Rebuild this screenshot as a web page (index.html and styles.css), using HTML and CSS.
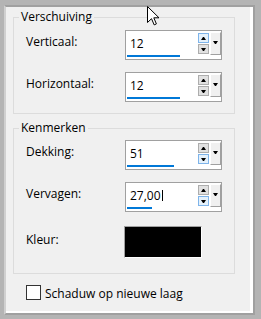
FILE: index.html
```html
<!DOCTYPE html>
<html lang="nl">
<head>
  <meta charset="UTF-8">
  <title>Slagschaduw</title>
  <link rel="stylesheet" href="styles.css">
</head>
<body>
  <div class="window">
    <div class="panel">

      <!-- Verschuiving -->
      <fieldset class="group group-shift">
        <legend>Verschuiving</legend>
        <div class="rows">
          <label class="lbl">Verticaal:</label>
          <div class="spin">
            <div class="field"><span class="val">12</span><span class="bar" style="width:53px"></span></div>
            <div class="arrows"><span class="btn hot"><i class="tri up"></i></span><span class="btn"><i class="tri down"></i></span></div>
            <span class="drop"><i class="tri down"></i></span>
          </div>

          <label class="lbl">Horizontaal:</label>
          <div class="spin">
            <div class="field"><span class="val">12</span><span class="bar" style="width:53px"></span></div>
            <div class="arrows"><span class="btn"><i class="tri up"></i></span><span class="btn"><i class="tri down"></i></span></div>
            <span class="drop"><i class="tri down"></i></span>
          </div>
        </div>
      </fieldset>

      <!-- Kenmerken -->
      <fieldset class="group group-props">
        <legend>Kenmerken</legend>
        <div class="rows">
          <label class="lbl">Dekking:</label>
          <div class="spin">
            <div class="field"><span class="val">51</span><span class="bar" style="width:47px"></span></div>
            <div class="arrows"><span class="btn"><i class="tri up"></i></span><span class="btn hot"><i class="tri down"></i></span></div>
            <span class="drop"><i class="tri down"></i></span>
          </div>

          <label class="lbl">Vervagen:</label>
          <div class="spin">
            <div class="field"><span class="val">27,00<span class="caret"></span></span><span class="bar" style="width:25px"></span></div>
            <div class="arrows"><span class="btn"><i class="tri up"></i></span><span class="btn hot"><i class="tri down"></i></span></div>
            <span class="drop"><i class="tri down"></i></span>
          </div>

          <label class="lbl lbl-color">Kleur:</label>
          <div class="swatch"></div>
        </div>
      </fieldset>

      <label class="check">
        <span class="box"></span>
        <span class="check-text">Schaduw op nieuwe laag</span>
      </label>

    </div>
  </div>

  <!-- muisaanwijzer -->
  <svg class="pointer" width="13" height="20" viewBox="0 0 13 20">
    <path d="M0.5 0.5 V16.5 L4.5 12.7 L7.2 18.9 L9.4 17.9 L6.8 11.8 H12 Z" fill="#fff" stroke="#000" stroke-width="1" stroke-linejoin="miter"/>
  </svg>
</body>
</html>
```

FILE: styles.css
```css
body { margin: 0; background: #b4b4b4; font-family: "Segoe UI", "Open Sans", sans-serif; font-size: 12px; color: #000; position: relative; width: 261px; height: 319px; overflow: hidden; }
.window { margin: 5px 6px 4px 4px; border: 2px solid #a0a0a0; border-left-color: #d0d0d0; }
.panel { background: #f0f0f0; border-right: 3px solid #fff; border-bottom: 2px solid #fff; height: 302px; padding-top: 2px; }

.group { margin: 0 15px 0 7px; padding: 0; border: 1px solid #dcdcdc; min-width: 0; }
.group legend { margin-left: 5px; padding: 0 2px; line-height: 16px; }
.group-shift { padding-top: 5px; padding-bottom: 11px; }
.group-props { margin-top: 6px; padding-top: 4px; padding-bottom: 15px; }

.rows { display: grid; grid-template-columns: 99px 97px; row-gap: 12px; padding-left: 12px; }
.group-props .rows .swatch { margin-top: 2px; }
.lbl { line-height: 16px; padding-top: 4px; }
.lbl-color { padding-top: 8px; }

.spin { display: flex; height: 30px; box-sizing: border-box; border: 1px solid #a0a0a0; background: #fff; }
.field { width: 72px; display: flex; flex-direction: column; padding: 5px 0 2px 0; box-sizing: border-box; }
.val { padding-left: 4px; line-height: 16px; }
.caret { display: inline-block; width: 1px; height: 11px; background: #000; vertical-align: -1px; margin-left: 1px; }
.bar { display: block; height: 2px; margin-top: auto; margin-left: 1px; background: #0078d7; }

.arrows { width: 11px; display: flex; flex-direction: column; gap: 1px; padding-top: 2px; }
.btn { height: 10px; box-sizing: border-box; border: 1px solid #adadad; background: #e1e1e1; display: flex; align-items: center; justify-content: center; }
.btn.hot { border-color: #7eb4ea; background: #e5f1fb; }
.drop { width: 11px; height: 23px; margin: 1px 0 0 1px; box-sizing: border-box; border: 1px solid #a0a0a0; border-top-color: #fff; border-left-color: #fff; background: #f0f0f0; display: flex; align-items: center; justify-content: center; padding-bottom: 2px; }

.tri { display: block; width: 1px; height: 0; border-left: 2px solid transparent; border-right: 2px solid transparent; }
.tri.up { border-bottom: 3px solid #000; }
.tri.down { border-top: 3px solid #000; }

.swatch { width: 78px; height: 32px; box-sizing: border-box; margin-left: -1px; background: #000; border: 1px solid #a0a0a0; border-right-color: #fff; border-bottom-color: #fff; }

.check { display: flex; align-items: flex-start; gap: 4px; margin: 11px 0 0 20px; }
.check .box { width: 15px; height: 15px; box-sizing: border-box; border: 1px solid #333; background: #fff; }
.check-text { line-height: 16px; margin-top: 1px; }

.pointer { position: absolute; left: 147px; top: 6px; }
```
